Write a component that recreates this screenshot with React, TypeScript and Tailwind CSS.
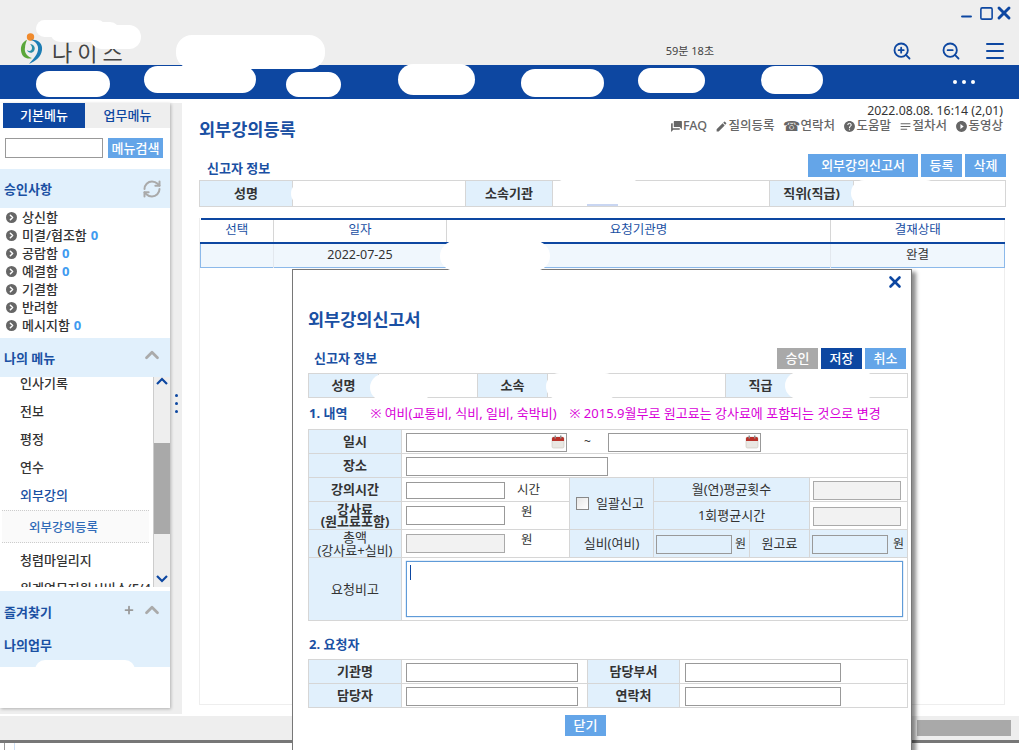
import { useState } from "react";
import {
  ChevronRight,
  ChevronUp,
  Menu,
  Minus,
  Plus,
  RefreshCw,
  Square,
  X,
  ZoomIn,
  ZoomOut,
} from "lucide-react";
import {
  MdEdit,
  MdForum,
  MdHelp,
  MdNotes,
  MdPlayCircleFilled,
} from "react-icons/md";

const approvals = [
  { name: "상신함" },
  { name: "미결/협조함", count: 0 },
  { name: "공람함", count: 0 },
  { name: "예결함", count: 0 },
  { name: "기결함" },
  { name: "반려함" },
  { name: "메시지함", count: 0 },
];

function Btn({ label, width, color }: { label: string; width: string; color: string }) {
  return (
    <button className={`${width} ${color} h-[23px] text-[13px] font-medium leading-none text-white`}>
      {label}
    </button>
  );
}

function Label({ children, bold = true }: { children: React.ReactNode; bold?: boolean }) {
  return (
    <td
      className={`border border-[#d6d6d6] bg-[#e1f0fc] p-0 text-center text-[13px] leading-[13px] text-[#333] ${
        bold ? "font-bold" : ""
      }`}
    >
      {children}
    </td>
  );
}

function Field({ w, h = "h-[19px]", disabled, calendar }: { w: string; h?: string; disabled?: boolean; calendar?: boolean }) {
  return (
    <div className={`relative inline-block align-middle ${w}`}>
      <input
        readOnly
        className={`block ${h} w-full border ${
          disabled ? "border-[#aaa] bg-[#f2f2f2]" : "border-[#999] bg-white"
        }`}
      />
      {calendar && <Calendar />}
    </div>
  );
}

function Calendar() {
  return (
    <svg viewBox="0 0 14 14" className="absolute right-[2px] top-[2px] h-[14px] w-[14px]">
      <rect x="1" y="2" width="12" height="11" rx="1.5" fill="#e9e7e2" stroke="#c9c5bd" strokeWidth="0.6" />
      <path d="M1 3.500A1.500 1.500 0 0 1 2.500 2h9A1.500 1.500 0 0 1 13 3.500V6H1z" fill="#b8322a" />
      <rect x="3.500" y="0.500" width="1.500" height="3" fill="#8d8d8d" />
      <rect x="9" y="0.500" width="1.500" height="3" fill="#8d8d8d" />
    </svg>
  );
}

function Logo() {
  return (
    <svg viewBox="20 30 24 32" className="mb-[6px] h-[32px] w-[24px] shrink-0">
      <circle cx="30.500" cy="35" r="3.700" fill="#f08a2c" />
      <path d="M27 38C21 40 19 48 23 54c3 3 7 3 9 2-5-1-8-6-7-10 0-3 1-6 2-8z" fill="#5aa63a" />
      <path d="M31 38c7-1 12 4 11 10-1 7-6 11-13 14 3-4 8-8 9-14 1-5-3-9-7-10z" fill="#1d7db4" />
      <path d="M30 42c4 0 6 4 4 7-2 3-6 2-7-1 2 2 5 1 5-2 0-2-1-3-2-4z" fill="#2b8fa8" />
    </svg>
  );
}

function Tool({ icon, label }: { icon: React.ReactNode; label: string }) {
  return (
    <span className="flex items-center text-[12.500px] font-medium leading-none text-[#666]">
      {icon}
      {label}
    </span>
  );
}

function ScrollArrow({ up }: { up?: boolean }) {
  return (
    <svg viewBox="0 0 12 8" className="mx-auto h-[8px] w-[12px] shrink-0 text-[#0d47a1]">
      <polyline
        points={up ? "1,7 6,2 11,7" : "1,1 6,6 11,1"}
        fill="none"
        stroke="currentColor"
        strokeWidth="2.200"
      />
    </svg>
  );
}

export default function App() {
  const [memo] = useState("");

  return (
    <div className="relative h-[750px] w-[1019px] overflow-hidden bg-white font-['Noto_Sans','Noto_Sans_CJK_KR',sans-serif] text-[13px] text-[#333]">
      {/* top header */}
      <header className="h-[65px] bg-[#eeeeee]">
        <div className="flex h-[26px] items-center justify-end pr-[5px] text-[#0d47a1]">
          <Minus className="mt-[6px] h-[15px] w-[15px]" strokeWidth={3.500} />
          <Square className="ml-[5px] h-[15px] w-[15px]" strokeWidth={2.500} />
          <X className="h-[20px] w-[20px]" strokeWidth={3.500} />
        </div>
        <div className="flex h-[39px] items-center pt-[11px]">
          <div className="flex items-center pl-[20px]">
            <Logo />
            <span className="ml-[8px] mt-[2px] text-[22px] leading-none tracking-[5px] text-[#444]">나이스</span>
          </div>
          <span className="ml-[538px] text-[11px] text-[#444]">59분 18초</span>
          <ZoomIn className="ml-[178px] h-[20px] w-[20px] text-[#0d47a1]" strokeWidth={2.200} />
          <ZoomOut className="ml-[29px] h-[20px] w-[20px] text-[#0d47a1]" strokeWidth={2.200} />
          <Menu className="ml-[22px] h-[24px] w-[24px] text-[#0d47a1]" strokeWidth={2} />
        </div>
      </header>

      {/* blue nav */}
      <nav className="flex h-[34px] items-center justify-end gap-[5px] bg-[#0d47a1] pr-[44px]">
        <span className="h-[4px] w-[4px] rounded-full bg-white" />
        <span className="h-[4px] w-[4px] rounded-full bg-white" />
        <span className="h-[4px] w-[4px] rounded-full bg-white" />
      </nav>

      <main className="flex h-[617px] pt-[4px]">
        {/* sidebar */}
        <div className="flex h-[611px] w-[182px] bg-[#eeeeee]">
          <aside className="flex h-[605px] w-[170px] flex-col bg-white shadow-[1px_1px_3px_rgba(0,0,0,0.25)]">
            <div className="flex h-[25px] bg-white pl-[3px]">
              <div className="flex w-[82px] items-center justify-center bg-[#0d47a1] text-[13px] font-medium text-white">
                기본메뉴
              </div>
              <div className="flex w-[85px] items-center justify-center bg-[#eeeeee] text-[13px] font-medium text-[#0d47a1]">
                업무메뉴
              </div>
            </div>
            <div className="flex h-[41px] gap-[5px] px-[5px] pt-[10px]">
              <input readOnly className="h-[20px] w-[98px] border border-[#999]" />
              <button className="h-[20px] w-[55px] bg-[#64a5e8] text-[13px] font-medium leading-none text-white">
                메뉴검색
              </button>
            </div>
            <div className="flex h-[39px] items-center justify-between bg-[#e1f0fc] pl-[4px] pr-[8px] pt-[2px] text-[13px] font-bold text-[#1a50a3]">
              승인사항
              <RefreshCw className="mb-[2px] h-[20px] w-[20px] text-[#aaa]" strokeWidth={2.400} />
            </div>
            <ul className="pb-[4px]">
              {approvals.map((a) => (
                <li key={a.name} className="flex h-[18px] items-center pl-[6px] pt-[1px] text-[13px] font-medium">
                  <span className="mr-[5px] flex h-[11px] w-[11px] items-center justify-center rounded-full bg-[#666]">
                    <ChevronRight className="h-[9px] w-[9px] text-white" strokeWidth={4} />
                  </span>
                  {a.name}
                  {a.count !== undefined && (
                    <span className="ml-[4px] font-bold text-[#3f9bf0]">{a.count}</span>
                  )}
                </li>
              ))}
            </ul>
            <div className="flex h-[39px] items-center justify-between bg-[#e1f0fc] pl-[4px] pr-[7px] pt-[3px] text-[13px] font-bold text-[#1a50a3]">
              나의 메뉴
              <ChevronUp className="mb-[8px] h-[22px] w-[22px] text-[#aaa]" strokeWidth={3} />
            </div>
            <div className="flex h-[210px] overflow-hidden">
              <div className="w-[153px] text-[13px] font-medium">
                <div className="-mt-[7px] flex h-[28px] items-center pl-[20px]">인사기록</div>
                <div className="flex h-[28px] items-center pl-[20px]">전보</div>
                <div className="flex h-[28px] items-center pl-[20px]">평정</div>
                <div className="flex h-[28px] items-center pl-[20px]">연수</div>
                <div className="flex h-[28px] items-center pl-[20px] text-[#1a50a3]">외부강의</div>
                <div className="ml-[2px] mr-[4px] flex h-[33px] items-center border-y border-dotted border-[#ccc] bg-[#fafafa] pl-[27px] pt-[4px] text-[12.500px] text-[#2f6ab8]">
                  외부강의등록
                </div>
                <div className="mt-[4px] flex h-[28px] items-center pl-[20px]">청렴마일리지</div>
                <div className="flex h-[28px] items-center whitespace-nowrap pl-[20px]">위계업무지원시비스(F/4</div>
              </div>
              <div className="flex h-full w-[17px] flex-col border-l border-[#ccc] bg-[#eeeeee]">
                <div className="h-[9px]">
                  <ScrollArrow up />
                </div>
                <div className="mt-[57px] h-[91px] shrink-0 bg-[#a9a9a9]" />
                <div className="mt-[41px]">
                  <ScrollArrow />
                </div>
              </div>
            </div>
            <div className="h-[4px] bg-white" />
            <div className="h-[76px] bg-[#e1f0fc] pl-[4px] pr-[7px] text-[13px] font-bold text-[#1a50a3]">
              <div className="flex h-[42px] items-center justify-between pt-[2px]">
                즐겨찾기
                <span className="mb-[6px] flex items-center text-[#aaa]">
                  <Plus className="mr-[6px] h-[12px] w-[12px] text-[#999]" strokeWidth={3.500} />
                  <ChevronUp className="h-[22px] w-[22px]" strokeWidth={3} />
                </span>
              </div>
              <div className="pt-[3px]">나의업무</div>
            </div>
          </aside>
          <div className="flex w-[12px] flex-col items-center gap-[5px] pt-[291px]">
            <span className="h-[3px] w-[3px] rounded-full bg-[#0d47a1]" />
            <span className="h-[3px] w-[3px] rounded-full bg-[#0d47a1]" />
            <span className="h-[3px] w-[3px] rounded-full bg-[#0d47a1]" />
          </div>
        </div>

        {/* content */}
        <section className="w-[837px] pl-[17px]">
          <div className="flex h-[51px] w-[806px] justify-between">
            <h1 className="pt-[15px] text-[17.500px] font-bold leading-[22px] text-[#1a50a3]">외부강의등록</h1>
            <div className="flex flex-col items-end pr-[2px]">
              <span className="text-[12.300px] leading-[15px] text-[#333]">2022.08.08. 16:14 (2,01)</span>
              <div className="mt-[1px] flex items-center gap-[8.500px]">
                <Tool icon={<MdForum className="h-[13px] w-[13px] -scale-x-100 text-[#666]" />} label="FAQ" />
                <Tool icon={<MdEdit className="h-[13px] w-[13px]" />} label="질의등록" />
                <Tool icon={<span className="font-['DejaVu_Sans'] text-[14px]">☎</span>} label="연락처" />
                <Tool icon={<MdHelp className="h-[13px] w-[13px]" />} label="도움말" />
                <Tool icon={<MdNotes className="h-[13px] w-[13px]" />} label="절차서" />
                <Tool icon={<MdPlayCircleFilled className="h-[13px] w-[13px]" />} label="동영상" />
              </div>
            </div>
          </div>

          <div className="flex h-[23px] w-[807px] items-end justify-between">
            <span className="pb-[1px] pl-[8px] text-[13px] font-bold leading-[15px] text-[#1a50a3]">신고자 정보</span>
            <div className="flex gap-[3px]">
              <Btn label="외부강의신고서" width="w-[110px]" color="bg-[#64a5e8]" />
              <Btn label="등록" width="w-[41px]" color="bg-[#64a5e8]" />
              <Btn label="삭제" width="w-[41px]" color="bg-[#64a5e8]" />
            </div>
          </div>

          <table className="mt-[3px] h-[27px] w-[806px] table-fixed border-collapse">
            <colgroup>
              <col className="w-[93px]" />
              <col className="w-[173px]" />
              <col className="w-[87px]" />
              <col className="w-[217px]" />
              <col className="w-[84px]" />
              <col className="w-[152px]" />
            </colgroup>
            <tbody>
              <tr>
                <Label>성명</Label>
                <td className="border border-[#d6d6d6]" />
                <Label>소속기관</Label>
                <td className="border border-[#d6d6d6]" />
                <Label>직위(직급)</Label>
                <td className="border border-[#d6d6d6]" />
              </tr>
            </tbody>
          </table>

          <div className="mt-[11px] h-[487px] w-[806px] border-x border-b border-[#eeeeee]">
            <table className="w-[804px] table-fixed border-collapse">
              <colgroup>
                <col className="w-[73px]" />
                <col className="w-[173px]" />
                <col className="w-[384px]" />
                <col className="w-[174px]" />
              </colgroup>
              <thead>
                <tr className="h-[24px] border-y-2 border-[#0d47a1] text-center text-[12.500px] text-[#1a50a3]">
                  <th className="border-r border-[#d6d6d6] pb-[1px] font-normal">선택</th>
                  <th className="border-r border-[#d6d6d6] pb-[1px] font-normal">일자</th>
                  <th className="border-r border-[#d6d6d6] pb-[1px] font-normal">요청기관명</th>
                  <th className="pb-[1px] font-normal">결재상태</th>
                </tr>
              </thead>
              <tbody>
                <tr className="h-[24px] border-x border-b border-[#8cb9ea] bg-[#f0f7fd] text-center text-[12.500px]">
                  <td className="border-r border-[#e3e8ee]" />
                  <td className="border-r border-[#e3e8ee]">2022-07-25</td>
                  <td className="border-r border-[#e3e8ee]" />
                  <td>완결</td>
                </tr>
              </tbody>
            </table>
          </div>
        </section>
      </main>

      {/* bottom bars */}
      <div className="flex h-[24px] justify-end bg-[#eeeeee] pr-[8px] pt-[4px]">
        <div className="h-[16px] w-[94px] bg-[#a9a9a9]" />
      </div>
      <div className="h-[3px] bg-[#777]" />
      <div className="flex h-[7px]">
        <div className="w-[5px] border-r border-[#999]" />
        <div className="ml-[9px] w-px bg-[#cfe0f5]" />
      </div>

      {/* modal */}
      <div className="absolute left-[292px] top-[269px] h-[490px] w-[620px] border border-[#777] bg-white pl-[15px] pr-[4px] shadow-[4px_3px_4px_rgba(0,0,0,0.45)]">
        <X className="absolute right-[7px] top-[3px] h-[18px] w-[18px] text-[#0d47a1]" strokeWidth={3.500} />
        <h2 className="pt-[37px] text-[17.500px] font-bold leading-[24px] text-[#1a50a3]">외부강의신고서</h2>

        <div className="mt-[17px] flex h-[21px] w-[599px] items-center justify-between">
          <span className="pl-[6px] text-[13px] font-bold text-[#1a50a3]">신고자 정보</span>
          <div className="flex gap-[3px] pr-px">
            <button className="h-[21px] w-[41px] bg-[#a9a9a9] text-[13px] font-medium leading-none text-white">승인</button>
            <button className="h-[21px] w-[41px] bg-[#0d47a1] text-[13px] font-medium leading-none text-white">저장</button>
            <button className="h-[21px] w-[41px] bg-[#64a5e8] text-[13px] font-medium leading-none text-white">취소</button>
          </div>
        </div>

        <table className="mt-[4px] h-[25px] w-[599px] table-fixed border-collapse">
          <colgroup>
            <col className="w-[70px]" />
            <col className="w-[99px]" />
            <col className="w-[70px]" />
            <col className="w-[178px]" />
            <col className="w-[70px]" />
            <col className="w-[112px]" />
          </colgroup>
          <tbody>
            <tr>
              <Label>성명</Label>
              <td className="border border-[#d6d6d6]" />
              <Label>소속</Label>
              <td className="border border-[#d6d6d6]" />
              <Label>직급</Label>
              <td className="border border-[#d6d6d6]" />
            </tr>
          </tbody>
        </table>

        <div className="flex h-[31px] w-[599px] items-center whitespace-nowrap text-[13px] leading-none">
          <span className="pl-px font-bold text-[#1a50a3]">1. 내역</span>
          <span className="ml-[23px] text-[#d800d8]">※ 여비(교통비, 식비, 일비, 숙박비)</span>
          <span className="ml-[13px] text-[#d800d8]">※ 2015.9월부로 원고료는 강사료에 포함되는 것으로 변경</span>
        </div>

        <table className="w-[599px] table-fixed border-collapse">
          <colgroup>
            <col className="w-[93px]" />
            <col className="w-[168px]" />
            <col className="w-[84px]" />
            <col className="w-[96px]" />
            <col className="w-[60px]" />
            <col className="w-[98px]" />
          </colgroup>
          <tbody>
            <tr className="h-[24px]">
              <Label>일시</Label>
              <td colSpan={5} className="border border-[#d6d6d6] pl-[4px]">
                <Field w="w-[161px]" calendar />
                <span className="inline-block w-[41px] text-center align-middle text-[12px]">~</span>
                <Field w="w-[153px]" calendar />
              </td>
            </tr>
            <tr className="h-[24px]">
              <Label>장소</Label>
              <td colSpan={5} className="border border-[#d6d6d6] pl-[4px]">
                <Field w="w-[202px]" />
              </td>
            </tr>
            <tr className="h-[24px]">
              <Label>강의시간</Label>
              <td className="border border-[#d6d6d6] pl-[4px]">
                <Field w="w-[99px]" h="h-[17px]" />
                <span className="ml-[12px] align-middle text-[12.500px]">시간</span>
              </td>
              <td rowSpan={2} className="border border-[#d6d6d6] bg-[#e1f0fc] text-[13px]">
                <div className="flex items-center justify-center gap-[7px] pr-[3px]">
                  <span className="h-[13px] w-[13px] border border-[#888] bg-gradient-to-br from-[#e6e6e6] to-white" />
                  일괄신고
                </div>
              </td>
              <td colSpan={2} className="border border-[#d6d6d6] bg-[#e1f0fc] text-center text-[13px]">월(연)평균횟수</td>
              <td className="border border-[#d6d6d6] pl-[3px]">
                <Field w="w-[88px]" disabled />
              </td>
            </tr>
            <tr className="h-[28px]">
              <Label>
                <span className="mb-[1px] block leading-[12px]">
                  강사료
                  <br />
                  (원고료포함)
                </span>
              </Label>
              <td className="border border-[#d6d6d6] pl-[4px]">
                <Field w="w-[99px]" />
                <span className="mb-[6px] ml-[16px] inline-block align-middle text-[12.500px]">원</span>
              </td>
              <td colSpan={2} className="border border-[#d6d6d6] bg-[#e1f0fc] text-center text-[13px]">1회평균시간</td>
              <td className="border border-[#d6d6d6] pl-[3px]">
                <Field w="w-[88px]" disabled />
              </td>
            </tr>
            <tr className="h-[28px]">
              <Label bold={false}>
                <span className="block leading-[13px]">
                  총액
                  <br />
                  (강사료+실비)
                </span>
              </Label>
              <td className="border border-[#d6d6d6] pl-[4px]">
                <Field w="w-[99px]" disabled />
                <span className="mb-[6px] ml-[16px] inline-block align-middle text-[12.500px]">원</span>
              </td>
              <td className="border border-[#d6d6d6] bg-[#e1f0fc] text-center text-[13px]">실비(여비)</td>
              <td className="whitespace-nowrap border border-[#d6d6d6] bg-[#e1f0fc] pl-[2px]">
                <input readOnly className="h-[19px] w-[76px] border border-[#999] align-middle" />
                <span className="ml-[3px] align-middle text-[12px]">원</span>
              </td>
              <td className="border border-[#d6d6d6] bg-[#e1f0fc] text-center text-[13px]">원고료</td>
              <td className="whitespace-nowrap border border-[#d6d6d6] bg-[#e1f0fc] pl-[2px]">
                <input readOnly className="h-[19px] w-[76px] border border-[#999] align-middle" />
                <span className="ml-[5px] align-middle text-[12px]">원</span>
              </td>
            </tr>
            <tr className="h-[63px]">
              <Label bold={false}>요청비고</Label>
              <td colSpan={5} className="border border-[#d6d6d6] pl-[4px] pr-[4px]">
                <div className="relative h-[56px] w-full border border-[#5f9bd8] shadow-[0_0_1px_#5f9bd8]">
                  <textarea readOnly value={memo} className="h-full w-full resize-none" />
                  <span className="absolute left-[3px] top-[3px] h-[15px] w-px bg-[#0d47a1]" />
                </div>
              </td>
            </tr>
          </tbody>
        </table>

        <div className="h-[38px] pl-px pt-[14px] text-[13px] font-bold leading-[18px] text-[#1a50a3]">2. 요청자</div>

        <table className="w-[599px] table-fixed border-collapse">
          <colgroup>
            <col className="w-[93px]" />
            <col className="w-[186px]" />
            <col className="w-[92px]" />
            <col className="w-[228px]" />
          </colgroup>
          <tbody>
            <tr className="h-[24px]">
              <Label>기관명</Label>
              <td className="border border-[#d6d6d6] pl-[4px]"><Field w="w-[172px]" /></td>
              <Label>담당부서</Label>
              <td className="border border-[#d6d6d6] pl-[5px]"><Field w="w-[156px]" /></td>
            </tr>
            <tr className="h-[24px]">
              <Label>담당자</Label>
              <td className="border border-[#d6d6d6] pl-[4px]"><Field w="w-[172px]" /></td>
              <Label>연락처</Label>
              <td className="border border-[#d6d6d6] pl-[5px]"><Field w="w-[156px]" /></td>
            </tr>
          </tbody>
        </table>

        <div className="flex w-[555px] justify-center pt-[7px]">
          <button className="h-[21px] w-[41px] bg-[#64a5e8] text-[13px] font-medium leading-none text-white">닫기</button>
        </div>
      </div>

      {/* whited-out areas of the capture */}
      <div className="absolute left-[36px] top-[20px] h-[17px] w-[70px] rounded-full bg-white" />
      <div className="absolute left-[90px] top-[25px] h-[24px] w-[51px] rounded-full bg-white" />
      <div className="absolute left-[50px] top-[22px] h-[20px] w-[70px] rounded-full bg-white" />
      <div className="absolute left-[176px] top-[35px] h-[34px] w-[149px] rounded-[16px] bg-white" />
      <div className="absolute left-[36px] top-[71px] h-[26px] w-[74px] rounded-full bg-white" />
      <div className="absolute left-[144px] top-[66px] h-[27px] w-[112px] rounded-full bg-white" />
      <div className="absolute left-[286px] top-[72px] h-[25px] w-[55px] rounded-full bg-white" />
      <div className="absolute left-[398px] top-[64px] h-[31px] w-[77px] rounded-full bg-white" />
      <div className="absolute left-[521px] top-[69px] h-[28px] w-[83px] rounded-full bg-white" />
      <div className="absolute left-[638px] top-[68px] h-[25px] w-[67px] rounded-full bg-white" />
      <div className="absolute left-[761px] top-[66px] h-[28px] w-[62px] rounded-full bg-white" />
      <div className="absolute left-[291px] top-[181px] h-[25px] w-[50px] rounded-full bg-white" />
      <div className="absolute left-[555px] top-[178px] h-[27px] w-[86px] rounded-full bg-white" />
      <div className="absolute left-[587px] top-[204px] h-[2px] w-[31px] bg-[#c9d6f2]" />
      <div className="absolute left-[851px] top-[180px] h-[26px] w-[88px] rounded-full bg-white" />
      <div className="absolute left-[440px] top-[241px] h-[30px] w-[110px] rounded-full bg-white" />
      <div className="absolute left-[370px] top-[374px] h-[27px] w-[62px] rounded-full bg-white" />
      <div className="absolute left-[546px] top-[373px] h-[27px] w-[72px] rounded-full bg-white" />
      <div className="absolute left-[785px] top-[372px] h-[27px] w-[92px] rounded-full bg-white" />
      <div className="absolute left-[35px] top-[660px] h-[20px] w-[100px] rounded-full bg-white" />
    </div>
  );
}
